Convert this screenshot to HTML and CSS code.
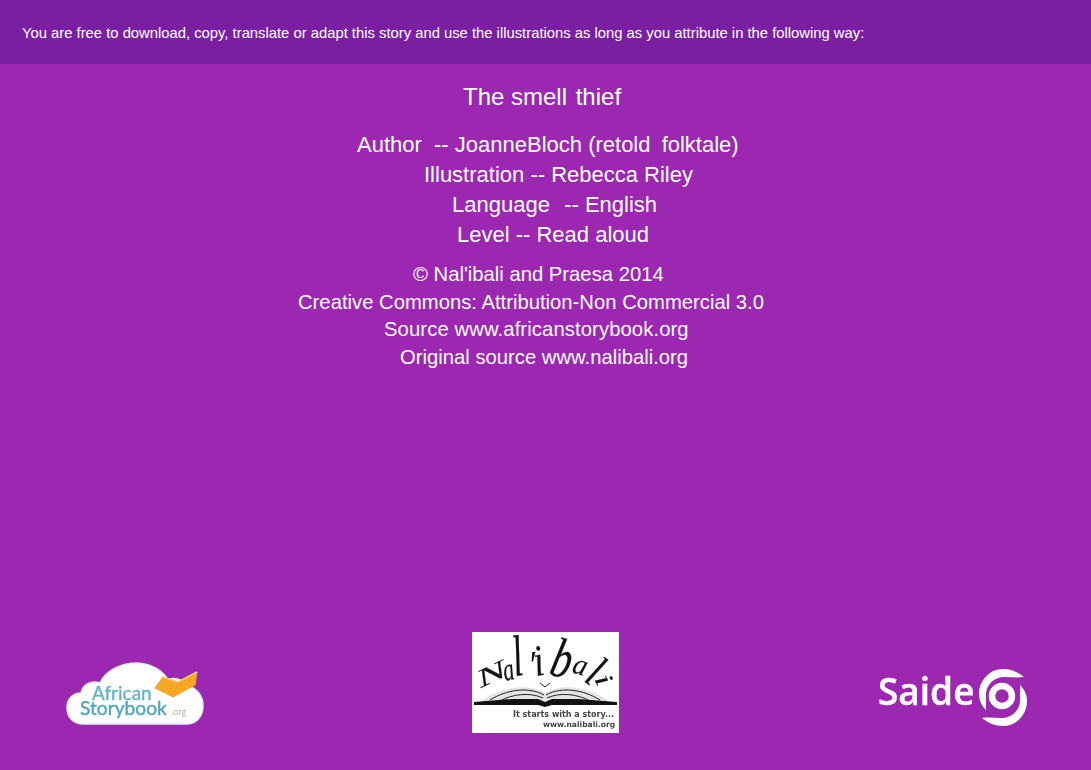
FILE: index.html
```html
<!DOCTYPE html>
<html lang="en">
<head>
<meta charset="utf-8">
<title>The smell thief</title>
<link rel="stylesheet" href="styles.css">
</head>
<body>
<div class="page">
  <header class="licence">You are free to download, copy, translate or adapt this story and use the illustrations as long as you attribute in the following way:</header>
  <main class="credits">
    <h1 class="title">The smell<span class="gap"> </span>thief</h1>
    <div class="people">
      <p class="line author">Author  -- JoanneBloch (retold<span class="gap-wide"> </span>folktale)</p>
      <p class="line illus">Illustration -- Rebecca Riley</p>
      <p class="line lang">Language<span class="gap"> </span> -- English</p>
      <p class="line level">Level -- Read aloud</p>
    </div>
    <div class="rights">
      <p class="line copy">© Nal'ibali and Praesa 2014</p>
      <p class="line cc">Creative Commons: Attribution-Non Commercial 3.0</p>
      <p class="line src">Source www.africanstorybook.org</p>
      <p class="line orig">Original source www.nalibali.org</p>
    </div>
  </main>
  <footer class="logos">
    <svg class="logo-asb" width="138" height="63" viewBox="0 0 138 63" role="img" aria-label="African Storybook.org">
      <path class="cloud" d="M18 62 C6 62 1 54 1 46 C1 37 7 31 15 31 C17 22 26 18 34 21 C40 8 55 1 72 1 C86 2 97 9 102 18 C108 15 117 17 120 24 C131 25 137 34 137 44 C137 54 131 62 120 62 Z"/>
      <path class="book" d="M89 26 L97 15 L112 20 L131 10 L129 23 L107 35 Z"/>
      <path class="book-edge" d="M97 15 L112 20 L131 10"/>
      <text class="asb-a" x="26" y="38">African</text>
      <text class="asb-s" x="14" y="53">Storybook</text>
      <text class="asb-o" x="105" y="53">.org</text>
    </svg>
    <svg class="logo-nal" width="147" height="101" viewBox="0 0 147 101" role="img" aria-label="Nal'ibali: It starts with a story">
      <rect width="147" height="101" fill="#fff"/>
      <text class="script" transform="translate(9 56) rotate(-26) scale(1.15 .62)">N</text>
      <text class="script" transform="translate(33 49) rotate(-12) scale(.55 .8)">a</text>
      <text class="script" transform="translate(43 44) rotate(-8) scale(.9 1.45)">l</text>
      <text class="script" transform="translate(56 46) scale(.8 1)">'</text>
      <text class="script" transform="translate(64 44) rotate(-10) scale(.9 1.1)">i</text>
      <text class="script" transform="translate(76 42) rotate(15) scale(1 1.4)">b</text>
      <text class="script" transform="translate(99 40) rotate(18) scale(.7 .75)">a</text>
      <text class="script" transform="translate(111 49) rotate(34) scale(.9 1.15)">l</text>
      <text class="script" transform="translate(122 47) rotate(63) scale(.9 .65)">i</text>
      <path class="book-page" d="M8 70 C25 56 55 50 73 61 C92 50 120 56 138 70 Z"/>
      <path class="book-lines" d="M18 68 C34 58 56 54 72 63 M74 63 C90 54 112 58 128 68 M28 69 C40 62 58 60 71 66 M75 66 C88 60 106 62 118 69 M68 51 L73 55 L78 51"/>
      <path class="book-base" d="M2 70 L40 67 L66 67 L73 70 L80 67 L106 67 L145 70 L145 73 L80 73 L73 75 L66 73 L2 73 Z"/>
      <text class="nal-tag" x="41" y="85">It starts with a story...</text>
      <text class="nal-url" x="71" y="95">www.nalibali.org</text>
    </svg>
    <svg class="logo-saide" width="150" height="58" viewBox="0 0 150 58" role="img" aria-label="Saide">
      <text class="saide" x="0" y="37">Saide</text>
      <circle class="ring" cx="124" cy="28" r="10"/>
      <path class="swirl" d="M146 9 C140 4 133 1 125 1 C111 1 101 13 101 26 C101 33 104 38 108 42 C108 36 108 31 108 27 C108 17 116 9 126 9 C133 9 140 10 146 9 Z"/>
      <path class="swirl swirl-low" d="M146 9 C140 4 133 1 125 1 C111 1 101 13 101 26 C101 33 104 38 108 42 C108 36 108 31 108 27 C108 17 116 9 126 9 C133 9 140 10 146 9 Z"/>
    </svg>
  </footer>
</div>
</body>
</html>
```
FILE: styles.css
```css
* { box-sizing: border-box; }
html, body { margin: 0; padding: 0; }
body {
  background: #9c27b0;
  color: #fff;
  font-family: "Liberation Sans", Arial, sans-serif;
}
.page {
  width: 1091px;
  height: 770px;
  display: flex;
  flex-direction: column;
  overflow: hidden;
}
.licence {
  height: 64px;
  flex: none;
  background: #7b1fa2;
  padding: 25px 0 0 22px;
  font-size: 14.8px;
  line-height: 16px;
}
.credits { flex: 1; padding-top: 19px; }
.title {
  margin: 0;
  font-weight: 400;
  font-size: 24px;
  line-height: 28px;
  padding-left: 463px;
}
.gap { word-spacing: 2px; }
.gap-wide { word-spacing: 5px; }
.people { margin-top: 19px; }
.line { margin: 0; white-space: pre; }
.people .line { font-size: 22px; line-height: 30px; }
.rights { margin-top: 11px; }
.rights .line { font-size: 20.25px; line-height: 27.5px; }
.author { padding-left: 357px; }
.illus { padding-left: 424px; }
.lang { padding-left: 452px; }
.level { padding-left: 457px; }
.copy { padding-left: 413px; }
.cc { padding-left: 298px; }
.src { padding-left: 384px; letter-spacing: .1px; }
.orig { padding-left: 400px; }
.logos {
  flex: none;
  display: flex;
  align-items: flex-end;
  padding: 0 63px 37px 66px;
}
.logos svg { display: block; flex: none; }
.logo-asb { margin-bottom: 8px; filter: blur(.4px); }
.logo-nal { margin-left: 268px; filter: blur(.3px); }
.logo-saide { margin-left: auto; margin-bottom: 7px; filter: blur(.4px); }
.cloud { fill: #fff; stroke: #dbf1f6; stroke-width: 1.5; }
.book { fill: #f5a623; stroke: #f5a623; stroke-width: 1; stroke-linejoin: round; }
.book-edge { fill: none; stroke: #f8cf7a; stroke-width: 1.5; }
.asb-a, .asb-s { font-family: "Lato", sans-serif; stroke-width: .35px; }
.asb-a { font-size: 19px; fill: #62b4c6; stroke: #62b4c6; }
.asb-s { font-size: 19.2px; fill: #4ba5bb; stroke: #4ba5bb; }
.asb-o { font-family: "Lato", sans-serif; font-size: 9px; fill: #b7b49c; }
.script {
  font-family: "Liberation Serif", serif;
  font-style: italic;
  font-size: 40px;
  fill: #111;
  stroke: #111;
  stroke-width: .2px;
}
.book-page { fill: #e4e4e4; }
.book-lines { fill: none; stroke: #222; stroke-width: 1; }
.book-base { fill: #111; }
.nal-tag, .nal-url { font-family: "DejaVu Sans", sans-serif; font-weight: 700; fill: #444; }
.nal-tag { font-size: 8px; }
.nal-url { font-size: 7.6px; }
.saide { font-family: "Open Sans", sans-serif; font-weight: 600; font-size: 37px; fill: #fff; stroke: #fff; stroke-width: .4px; }
.ring { fill: none; stroke: #fff; stroke-width: 6.5; }
.swirl { fill: #fff; }
.swirl-low { transform: rotate(180deg); transform-origin: 125px 29.5px; }
```
